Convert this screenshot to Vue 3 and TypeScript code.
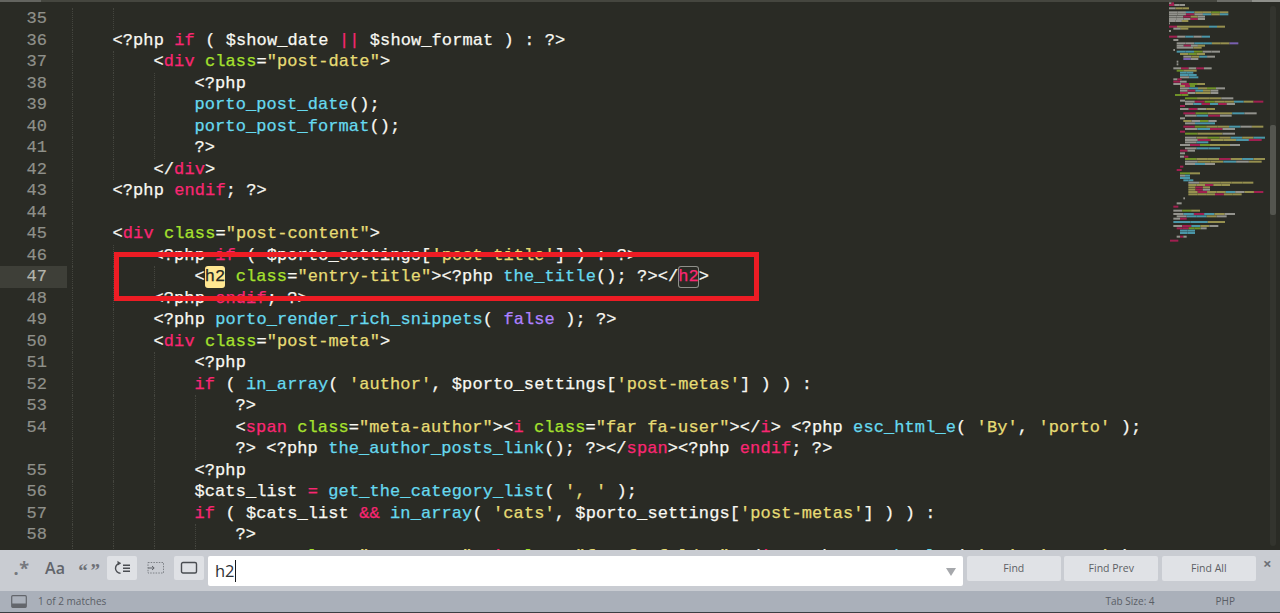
<script setup lang="ts">
interface Seg { c: string; t: string }
interface Row { n: string; depth: number; segs: Seg[]; active: boolean }

const parse = (s: string): Seg[] => {
  const out: Seg[] = []
  const re = /\{(\w+)\|(.*?)\}/g
  let last = 0
  let m: RegExpExecArray | null
  while ((m = re.exec(s))) {
    if (m.index > last) out.push({ c: '', t: s.slice(last, m.index) })
    out.push({ c: m[1], t: m[2] })
    last = m.index + m[0].length
  }
  if (last < s.length) out.push({ c: '', t: s.slice(last) })
  return out
}

const src: [string, number, string][] = [
  ['35', 2, ''],
  ['36', 1, `<?php {p|if} ( $show_date {p|||} $show_format ) : ?>`],
  ['37', 2, `<{p|div} {g|class}={y|"post-date"}>`],
  ['38', 3, `<?php`],
  ['39', 3, `{b|porto_post_date}();`],
  ['40', 3, `{b|porto_post_format}();`],
  ['41', 3, `?>`],
  ['42', 2, `</{p|div}>`],
  ['43', 1, `<?php {p|endif}; ?>`],
  ['44', 1, ''],
  ['45', 1, `<{p|div} {g|class}={y|"post-content"}>`],
  ['46', 2, `<?php {p|if} ( $porto_settings[{y|'post-title'}] ) : ?>`],
  ['47', 3, `<{hl|h2} {g|class}={y|"entry-title"}><?php {b|the_title}(); ?></{box|h2}>`],
  ['48', 2, `<?php {p|endif}; ?>`],
  ['49', 2, `<?php {b|porto_render_rich_snippets}( {v|false} ); ?>`],
  ['50', 2, `<{p|div} {g|class}={y|"post-meta"}>`],
  ['51', 3, `<?php`],
  ['52', 3, `{p|if} ( {b|in_array}( {y|'author'}, $porto_settings[{y|'post-metas'}] ) ) :`],
  ['53', 4, `?>`],
  ['54', 4, `<{p|span} {g|class}={y|"meta-author"}><{p|i} {g|class}={y|"far fa-user"}></{p|i}> <?php {b|esc_html_e}( {y|'By'}, {y|'porto'} );`],
  ['', 4, `?> <?php {b|the_author_posts_link}(); ?></{p|span}><?php {p|endif}; ?>`],
  ['55', 3, `<?php`],
  ['56', 3, `$cats_list {p|=} {b|get_the_category_list}( {y|', '} );`],
  ['57', 3, `{p|if} ( $cats_list {p|&&} {b|in_array}( {y|'cats'}, $porto_settings[{y|'post-metas'}] ) ) :`],
  ['58', 4, `?>`],
  ['59', 4, `<{p|span} {g|class}={y|"meta-cats"}><{p|i} {g|class}={y|"far fa-folder"}></{p|i}> <?php {b|esc_html_e}( {y|'In'}, {y|'porto'} );`],
]
const rows: Row[] = src.map(([n, depth, t]) => ({ n, depth, segs: parse(t), active: n === '47' }))

// minimap: [zoomed y, zoomed x0, zoomed x1, colour run], zoomed = 3× real pixels from (1165, base)
const mm: [number, [number, number, number, string][]][] = [
  [0, [
    [10, 12, 27, 'wp'], [15, 12, 60, 'pww'], [25, 12, 72, 'wyy'],
    [37, 12, 190, 'wwbyygy'], [43, 12, 190, 'wwpwbyb'], [50, 12, 120, 'wwpyw'], [57, 12, 120, 'wwwpw'], [63, 12, 70, 'wwy'], [70, 12, 15, 'w'],
    [80, 12, 180, 'pyyyyby'], [86, 25, 70, 'wy'], [93, 12, 18, 'w'],
    [110, 12, 135, 'pwbwb'], [120, 25, 40, 'w'],
    [130, 35, 220, 'wwbbyyv'], [137, 35, 120, 'wpwy'], [143, 35, 110, 'wwy'], [150, 25, 30, 'w'],
    [155, 35, 165, 'bbgww'], [162, 45, 120, 'ygy'], [170, 55, 150, 'wybw'], [177, 55, 100, 'vw'],
    [185, 35, 40, 'w'], [193, 35, 40, 'w'],
    [205, 25, 140, 'wpwpw'], [212, 35, 95, 'gyy'], [218, 45, 85, 'bb'], [225, 45, 95, 'bb'], [232, 45, 100, 'wb'],
    [238, 25, 50, 'wp'], [245, 25, 65, 'pw'], [252, 25, 120, 'wpgy'],
  ]],
  [85, [
    [3, 45, 90, 'ypg'], [10, 45, 180, 'wbygw'], [17, 45, 160, 'wpbyw'], [24, 45, 160, 'pwyyw'], [30, 30, 70, 'gg'],
    [40, 60, 205, 'gyyw'], [47, 45, 60, 'w'], [50, 60, 295, 'wpgyybyp'], [57, 60, 210, 'wbpbpw'], [63, 45, 60, 'p'],
    [72, 45, 150, 'wpwy'], [85, 55, 275, 'pgyybw'], [92, 60, 200, 'wbpw'], [100, 45, 60, 'w'],
    [108, 55, 155, 'ywgw'], [115, 60, 150, 'wbb'], [125, 55, 295, 'pgyybwy'], [132, 60, 210, 'wbpw'], [140, 45, 60, 'p'],
    [146, 60, 210, 'gyyw'], [158, 60, 300, 'wygybyb'], [165, 60, 290, 'wpyybp'], [172, 60, 130, 'wb'],
    [180, 45, 225, 'wpgyyw'], [190, 60, 165, 'wbb'], [197, 45, 90, 'pw'], [205, 45, 60, 'w'],
    [215, 45, 70, 'wp'], [222, 60, 300, 'gyypyby'], [230, 60, 290, 'wyybwy'], [237, 60, 150, 'wbw'], [245, 45, 55, 'p'],
  ]],
  [170, [
    [0, 35, 50, 'p'], [10, 45, 105, 'gy'], [17, 45, 75, 'wb'], [24, 45, 75, 'bb'], [31, 55, 85, 'bb'],
    [38, 70, 265, 'wyyyyy'], [45, 70, 195, 'yypyy'], [52, 70, 135, 'ypy'], [59, 70, 135, 'ypw'],
    [66, 70, 295, 'ypyybwyp'], [73, 70, 230, 'yyypyy'], [85, 55, 60, 'w'],
    [100, 35, 50, 'w'], [110, 25, 40, 'p'], [122, 25, 105, 'wgy'],
    [132, 25, 210, 'wbpbyw'], [139, 35, 185, 'wbbyw'], [146, 25, 65, 'wp'], [156, 25, 180, 'bby'],
    [168, 25, 160, 'wpbyw'], [175, 35, 125, 'ppggw'], [182, 45, 90, 'bb'], [189, 45, 90, 'bb'], [200, 35, 65, 'wpw'], [212, 15, 40, 'p'],
  ]],
]
const palette: Record<string, string> = { w: '#93938d', p: '#a01f50', b: '#4a96a8', y: '#96904f', g: '#6f9128', v: '#7a60b0' }
const bars: { x: number; y: number; w: number; f: string; k: string }[] = []
for (const [base, list] of mm) {
  for (const [zy, x0, x1, run] of list) {
    const w = (x1 - x0) / 3 / run.length
    run.split('').forEach((c, i) => {
      bars.push({ x: x0 / 3 + i * w, y: base + zy / 3 - 1, w, f: palette[c], k: `${base}-${zy}-${i}` })
    })
  }
}
</script>

<template>
  <div class="app">
    <div class="topstrip">
      <span class="ts-a"></span><span class="ts-b"></span><span class="ts-c"></span><span class="ts-d"></span>
    </div>
    <div class="editor">
      <div class="lines">
        <div v-for="(r, i) in rows" :key="i" class="row">
          <div class="num" :class="{ active: r.active }">{{ r.n }}</div>
          <div class="code">
            <span v-for="d in r.depth" :key="d" class="indent"></span><span
              v-for="(s, j) in r.segs" :key="j" :class="s.c">{{ s.t }}</span>
          </div>
        </div>
        <div class="redbox"></div>
      </div>
      <svg class="minimap" width="105" height="250" viewBox="0 0 105 250">
        <rect v-for="b in bars" :key="b.k" :x="b.x" :y="b.y" :width="b.w" height="2" :fill="b.f" />
      </svg>
      <div class="scroll">
        <div class="track"><div class="thumb"></div></div>
      </div>
    </div>
    <div class="panel">
      <button class="tog"><span class="t-re">.*</span></button>
      <button class="tog"><span class="t-aa">Aa</span></button>
      <button class="tog"><span class="t-q">“ ”</span></button>
      <button class="tog on">
        <svg width="18" height="16" viewBox="0 0 18 16" fill="none" stroke="#4a4d52" stroke-width="1.4">
          <path d="M7.5 3.2 A5 5 0 1 0 7.5 13.2" />
          <path d="M4.4 0.8 L7.8 3.2 L4.8 5.6" fill="#4a4d52" stroke="none" />
          <path d="M10 5.2H17M10 8.2H17M10 11.2H17" />
        </svg>
      </button>
      <button class="tog">
        <svg width="18" height="14" viewBox="0 0 18 14" fill="none" stroke="#7d8086" stroke-width="1">
          <rect x="1" y="1.5" width="15.5" height="10.5" stroke-dasharray="1.5 1.2" />
          <path d="M1 7H7M5 5l2.2 2L5 9" stroke="#5f6268" />
        </svg>
      </button>
      <button class="tog on">
        <svg width="18" height="14" viewBox="0 0 18 14" fill="none" stroke="#4a4d52" stroke-width="1.4">
          <rect x="1.5" y="1.5" width="15" height="10.5" rx="1.5" />
        </svg>
      </button>
      <div class="input">
        <span class="typed">h2</span><span class="caret"></span>
        <span class="arrow"></span>
      </div>
      <button class="act">Find</button>
      <button class="act">Find Prev</button>
      <button class="act">Find All</button>
      <button class="close">×</button>
    </div>
    <div class="status">
      <svg class="st-ic" width="16" height="13" viewBox="0 0 16 13" fill="none">
        <rect x="0.7" y="0.7" width="14.6" height="11.6" rx="1" stroke="#63666c" stroke-width="1.2" />
        <rect x="1" y="8.5" width="14" height="3.8" fill="#63666c" />
      </svg>
      <span class="matches">1 of 2 matches</span>
      <span class="tabsize">Tab Size: 4</span>
      <span class="lang">PHP</span>
    </div>
  </div>
</template>

<style>
html, body { margin: 0; padding: 0; background: #272822; }
</style>

<style scoped>
.app { width: 1280px; height: 613px; display: flex; flex-direction: column; overflow: hidden; background: #2a2b25; }
.topstrip { height: 2px; display: flex; flex: none; }
.ts-a { width: 41px; background: #63645f; }
.ts-b { width: 1176px; background: #45463f; }
.ts-c { width: 35px; background: #6d6e69; }
.ts-d { width: 28px; background: #8f908b; }
.editor { flex: none; height: 548px; display: flex; overflow: hidden; position: relative; }
.lines { position: relative; padding-top: 6.25px; width: 1165px; flex: none; }
.row { display: flex; height: 21.5px; }
.num { width: 67px; margin-right: 4.5px; flex: none; box-sizing: border-box; padding-right: 20px; text-align: right; color: #8f908a; font: 17px/21.5px "Liberation Mono", monospace; letter-spacing: 0.05px; -webkit-text-stroke: 0.2px; }
.num.active { background: #3e3f38; color: #b3b4ac; }
.code { white-space: pre; color: #f8f8f2; font: 17px/21.5px "Liberation Mono", monospace; letter-spacing: 0.09px; display: flex; -webkit-text-stroke: 0.25px; }
.indent { width: 41px; flex: none; height: 21.5px; box-sizing: border-box; border-left: 1px dotted #44453e; }
.p { color: #f92672; }
.g { color: #a6e22e; }
.y { color: #e6db74; }
.b { color: #66d9ef; }
.v { color: #ae81ff; }
.hl { background: #ffe792; color: #272822; border-radius: 3px; height: 22px; }
.box { color: #f92672; box-shadow: inset 0 0 0 1px #8f908a; border-radius: 3px; height: 22px; }
.redbox { position: absolute; left: 114px; top: 250px; width: 645px; height: 49px; box-sizing: border-box; border: 5.5px solid #ed1c24; }
.minimap { flex: none; margin-top: -2px; filter: blur(0.5px); }
.scroll { flex: none; width: 10px; padding: 4px 4px 4px 0; box-sizing: border-box; height: 100%; }
.track { width: 6px; height: 100%; background: #33342e; border-radius: 3px; position: relative; }
.thumb { position: absolute; left: 0; top: 119px; width: 6px; height: 90px; background: #54554f; border-radius: 2px; }
.panel { flex: none; height: 41px; box-sizing: border-box; padding: 6px 0 0 6.5px; display: flex; align-items: flex-start; gap: 3.5px; background: #c9ccd2; }
.tog { flex: none; width: 30px; height: 24px; border: 0; padding: 0; border-radius: 2px; background: transparent; display: flex; align-items: center; justify-content: center; color: #6e7177; }
.tog.on { background: #dfe1e5; }
.t-re { font: bold 18px/24px "Open Sans", sans-serif; letter-spacing: 0.5px; color: #75787e; }
.t-aa { font: 600 16px/24px "Open Sans", sans-serif; color: #62656b; }
.t-q { font: bold 19px/30px "Liberation Serif", serif; letter-spacing: -1px; color: #6e7177; height: 24px; }
.input { flex: none; width: 755.3px; height: 30px; margin-left: 0.5px; background: #fff; border-radius: 2px; display: flex; align-items: center; box-sizing: border-box; padding-left: 7px; }
.typed { font: 16.5px/30px "Open Sans", sans-serif; color: #2d3035; }
.caret { width: 1.5px; height: 22px; background: #15171b; }
.arrow { margin-left: auto; margin-right: 7px; width: 0; height: 0; border-left: 5px solid transparent; border-right: 5px solid transparent; border-top: 8px solid #a6a8ac; margin-top: 2px; }
.act { flex: none; width: 94px; height: 25px; border: 0; padding: 0; border-radius: 2px; background: #e0e2e6; color: #5c5f65; font: 10.5px/25px "Open Sans", sans-serif; }
.close { flex: none; width: 16px; height: 14px; border: 0; padding: 0; background: transparent; color: #6d7076; font: bold 15px/12px "Open Sans", sans-serif; }
.status { flex: none; height: 22px; box-sizing: border-box; border-bottom: 1px solid #3b3d42; background: #aab0ba; display: flex; align-items: center; padding-left: 11px; color: #5a5e66; font: 10px/21px "Open Sans", sans-serif; }
.st-ic { flex: none; }
.matches { margin-left: 11px; }
.tabsize { margin-left: auto; }
.lang { margin-left: 61px; margin-right: 45px; }
</style>
